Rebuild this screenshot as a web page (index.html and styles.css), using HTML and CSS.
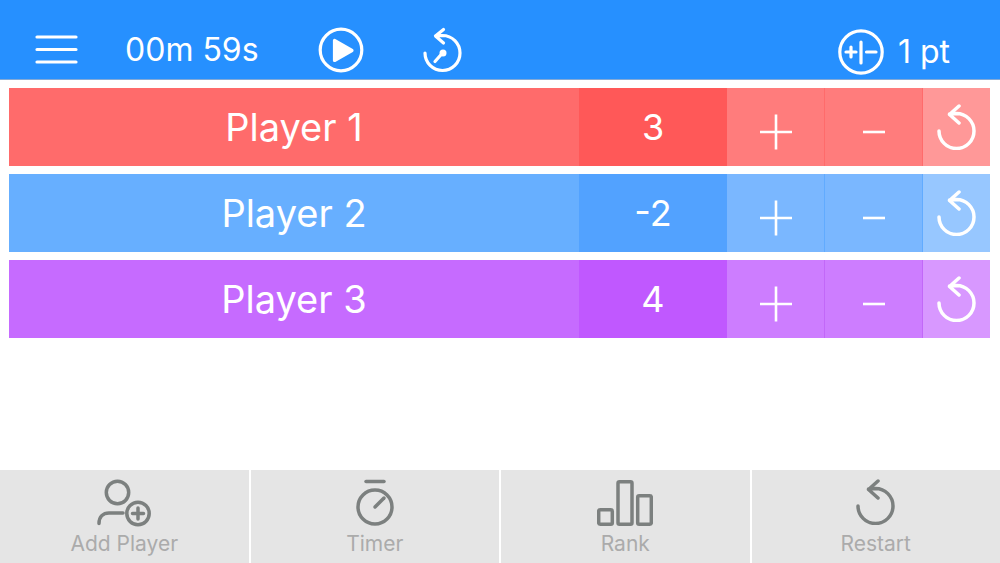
FILE: index.html
```html
<!DOCTYPE html>
<html lang="en">
<head>
    <meta charset="UTF-8">
    <meta name="viewport" content="width=device-width, initial-scale=1.0">
    <title>Score Counter</title>
    <link rel="stylesheet" href="styles.css">
</head>
<body>

    <!-- shared icons -->
    <svg class="icon-defs" aria-hidden="true">
        <symbol id="icon-reset" viewBox="0 0 40 46">
            <path d="M2 27A17.5 17.5 0 1 0 19.5 9.5L12.5 10M22 2L12.5 10.5L22 19"/>
        </symbol>
        <symbol id="icon-plus" viewBox="0 0 36 36">
            <path d="M2 18H34M18 0.5V35.5"/>
        </symbol>
        <symbol id="icon-minus" viewBox="0 0 36 36">
            <path d="M7 18H29"/>
        </symbol>
    </svg>

    <!-- top bar -->
    <header class="top-bar">
        <button class="menu-btn" aria-label="Menu">
            <svg width="43" height="30" viewBox="0 0 43 30"><path d="M2 2H41M2 14.5H41M2 27H41"/></svg>
        </button>
        <span class="time">00m 59s</span>
        <button aria-label="Start timer">
            <svg width="46" height="46" viewBox="0 0 46 46">
                <circle cx="23" cy="23" r="20.8"/>
                <path class="solid" d="M16.5 13.5V33.5L34 23.5Z"/>
            </svg>
        </button>
        <button aria-label="Reset timer">
            <svg width="40" height="46" viewBox="0 0 40 46">
                <path d="M2 26A17.5 17.5 0 1 0 19.5 8.5L12.5 8.8M20.5 2.5L12.5 9L20.5 16"/>
                <path d="M19.5 26L12 34.5"/>
                <circle class="dot" cx="20" cy="26" r="3.5"/>
            </svg>
        </button>
        <button class="points-btn">
            <svg width="46" height="46" viewBox="0 0 46 46">
                <circle cx="23" cy="23" r="21.2"/>
                <path d="M8 23H18M13 18V28M23 13V34M28.5 23H38"/>
            </svg>
            <span>1 pt</span>
        </button>
    </header>

    <!-- players -->
    <main class="players">
        <div class="player red">
            <span class="name">Player 1</span>
            <span class="score">3</span>
            <button class="step" aria-label="Add point"><svg><use href="#icon-plus"/></svg></button>
            <button class="step" aria-label="Remove point"><svg><use href="#icon-minus"/></svg></button>
            <button class="reset" aria-label="Reset score"><svg><use href="#icon-reset"/></svg></button>
        </div>
        <div class="player blue">
            <span class="name">Player 2</span>
            <span class="score">-2</span>
            <button class="step" aria-label="Add point"><svg><use href="#icon-plus"/></svg></button>
            <button class="step" aria-label="Remove point"><svg><use href="#icon-minus"/></svg></button>
            <button class="reset" aria-label="Reset score"><svg><use href="#icon-reset"/></svg></button>
        </div>
        <div class="player purple">
            <span class="name">Player 3</span>
            <span class="score">4</span>
            <button class="step" aria-label="Add point"><svg><use href="#icon-plus"/></svg></button>
            <button class="step" aria-label="Remove point"><svg><use href="#icon-minus"/></svg></button>
            <button class="reset" aria-label="Reset score"><svg><use href="#icon-reset"/></svg></button>
        </div>
    </main>

    <!-- bottom bar -->
    <nav class="bottom-bar">
        <button>
            <svg width="56" height="48" viewBox="0 0 56 48">
                <circle cx="21.5" cy="13.5" r="11.2"/>
                <path d="M3 44.5C3 38 7 34 13 34H27"/>
                <circle cx="42" cy="34.5" r="11.2"/>
                <path d="M36.5 34.5H47.5M42 29V40"/>
            </svg>
            <span>Add Player</span>
        </button>
        <button>
            <svg width="40" height="48" viewBox="0 0 40 48">
                <path d="M11 2.5H29"/>
                <circle cx="20" cy="28" r="17"/>
                <path d="M20 28L29 19"/>
            </svg>
            <span>Timer</span>
        </button>
        <button>
            <svg width="56" height="48" viewBox="0 0 56 48">
                <rect x="1.7" y="30.7" width="13.6" height="14.6" rx="1.5"/>
                <rect x="21" y="2.7" width="14" height="42.6" rx="1.5"/>
                <rect x="40.7" y="16.7" width="13.6" height="28.6" rx="1.5"/>
            </svg>
            <span>Rank</span>
        </button>
        <button>
            <svg width="40" height="48"><use href="#icon-reset" width="40" height="46"/></svg>
            <span>Restart</span>
        </button>
    </nav>

</body>
</html>
```

FILE: styles.css
```css
* { box-sizing: border-box; }
body {
    display: flex;
    flex-direction: column;
    min-height: 100vh;
    margin: 0;
    background-color: #fff;
    font-family: Inter, "Liberation Sans", sans-serif;
}
button {
    display: flex;
    align-items: center;
    justify-content: center;
    margin: 0;
    padding: 0;
    border: none;
    background: none;
    color: inherit;
    font: inherit;
    cursor: pointer;
}
svg {
    display: block;
    fill: none;
    stroke: currentColor;
    stroke-width: 3.5;
    stroke-linecap: round;
    stroke-linejoin: round;
}
.icon-defs { position: absolute; width: 0; height: 0; }

/* top bar */
.top-bar {
    display: flex;
    align-items: center;
    gap: 59px;
    height: 80px;
    padding: 20px 50px 0 35px;
    border-bottom: 1px solid #83a9d6;
    background-color: #2690ff;
    color: #fff;
    font-size: 32px;
}
.top-bar svg { stroke-width: 3.2; }
.menu-btn { margin-right: -12px; }
.solid { fill: currentColor; }
.dot { fill: currentColor; stroke: none; }
.points-btn { gap: 14px; margin-left: auto; padding-top: 4px; }

/* players */
.players {
    display: flex;
    flex: 1;
    flex-direction: column;
    gap: 8px;
    padding: 8px 10px 8px 9px;
}
.player {
    display: grid;
    grid-template-columns: 1fr 148px 98px 98px 67px;
    height: 78px;
    color: #fff;
}
.name, .score {
    display: flex;
    align-items: center;
    justify-content: center;
    font-size: 38px;
}
.score { font-size: 36px; }
.step { padding-top: 10px; border-right: 1px solid; }
.step svg { width: 36px; height: 36px; color: #fff; stroke-width: 2.6; stroke-linecap: butt; }
.reset svg { width: 40px; height: 46px; }

.red { background-color: #ff6b6b; }
.red .score { background-color: #ff5858; }
.red .step { background-color: #ff7c7c; border-color: #ff6b6b; }
.red .reset { background-color: #ff9898; }

.blue { background-color: #67afff; }
.blue .score { background-color: #52a2ff; }
.blue .step { background-color: #7ab7ff; border-color: #61abff; }
.blue .reset { background-color: #97c7ff; }

.purple { background-color: #c66bff; }
.purple .score { background-color: #c058ff; }
.purple .step { background-color: #cd7dff; border-color: #c268f8; }
.purple .reset { background-color: #d898ff; }

/* bottom bar */
.bottom-bar {
    display: grid;
    grid-template-columns: repeat(4, 1fr);
    gap: 2px;
    height: 93px;
}
.bottom-bar button {
    flex-direction: column;
    gap: 4px;
    padding-top: 2px;
    background-color: #e5e5e5;
    color: #ababab;
    font-size: 21px;
    line-height: 26px;
}
.bottom-bar svg { color: #7c807f; }
```
